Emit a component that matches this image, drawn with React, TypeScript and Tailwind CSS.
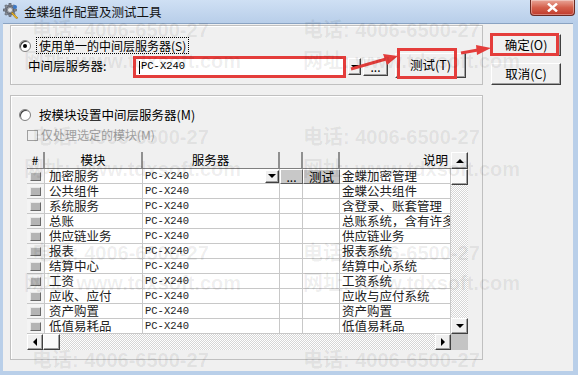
import React from "react";

const CJK = "font-['Noto_Sans_CJK_SC','Noto_Sans',sans-serif]";
const MONO = "font-['Liberation_Mono',monospace]";

const rows: [string, string][] = [
  ["加密服务", "金蝶加密管理"],
  ["公共组件", "金蝶公共组件"],
  ["系统服务", "含登录、账套管理"],
  ["总账", "总账系统，含有许多"],
  ["供应链业务", "供应链业务"],
  ["报表", "报表系统"],
  ["结算中心", "结算中心系统"],
  ["工资", "工资系统"],
  ["应收、应付", "应收与应付系统"],
  ["资产购置", "资产购置"],
  ["低值易耗品", "低值易耗品"],
];

const raised =
  "bg-[#f0f0f0] border border-t-white border-l-white border-r-[#404040] border-b-[#404040] shadow-[inset_-1px_-1px_0_#a0a0a0]";

function Tri({ dir }: { dir: "up" | "down" | "left" | "right" }) {
  const pts = {
    up: "0,4 4,0 8,4",
    down: "0,0 8,0 4,4",
    left: "4,0 4,8 0,4",
    right: "0,0 0,8 4,4",
  }[dir];
  const horiz = dir === "up" || dir === "down";
  return (
    <svg width={horiz ? 8 : 4} height={horiz ? 4 : 8} viewBox={horiz ? "0 0 8 4" : "0 0 4 8"}>
      <polygon points={pts} fill="#000" />
    </svg>
  );
}

function Radio({ on }: { on?: boolean }) {
  return (
    <div className="w-[12px] h-[12px] rounded-full border border-[#808080] bg-white shadow-[inset_1px_1px_0_#404040] flex items-center justify-center">
      {on && <div className="w-[4px] h-[4px] rounded-full bg-black" />}
    </div>
  );
}

function Watermarks() {
  const phone = [
    [32, 20], [303, 20], [32, 127], [303, 127], [32, 243], [303, 243], [32, 350], [303, 350],
  ];
  const site = [
    [24, 51], [303, 51], [24, 159], [303, 159], [24, 273], [303, 273],
  ];
  return (
    <div className="absolute inset-0 pointer-events-none text-black/[0.07] font-bold text-[20px] leading-[20px] font-['Liberation_Sans','Noto_Sans_CJK_SC',sans-serif]">
      {phone.map(([x, y], i) => (
        <div key={"p" + i} className="absolute whitespace-nowrap" style={{ left: x, top: y }}>
          电话: 4006-6500-27
        </div>
      ))}
      {site.map(([x, y], i) => (
        <div key={"s" + i} className="absolute whitespace-nowrap" style={{ left: x, top: y }}>
          网址: www.tdxsoft.com
        </div>
      ))}
    </div>
  );
}

function Annotations() {
  return (
    <svg className="absolute inset-0 pointer-events-none" width={578} height={375}>
      <g fill="none" stroke="#e43d3b" strokeWidth={3}>
        <rect x={398.5} y={49.5} width={57} height={28} />
        <rect x={491.5} y={34.5} width={66} height={20} />
        <line x1={351} y1={69} x2={386} y2={59} />
        <line x1={461} y1={53} x2={478} y2={50} />
      </g>
      <polygon points="383,54 398,56 387,65" fill="#e43d3b" />
      <polygon points="476,45 491,48 477,55" fill="#e43d3b" />
    </svg>
  );
}

function GearIcon() {
  return (
    <svg width="16" height="16" viewBox="0 0 16 16">
      <g fill="#8a8f98" stroke="#4d525a" strokeWidth="0.6">
        <circle cx="7" cy="7" r="5" />
        {[0, 45, 90, 135, 180, 225, 270, 315].map((a) => (
          <rect key={a} x="6" y="0.5" width="2" height="3" transform={`rotate(${a} 7 7)`} />
        ))}
      </g>
      <circle cx="7" cy="7" r="2" fill="#dfe3e8" />
      <path d="M9 9 L15 15 L13 15.5 L8.5 10.5 Z" fill="#e8b426" stroke="#9a6d08" strokeWidth="0.5" />
      <circle cx="12" cy="4" r="2" fill="#3a78c8" />
    </svg>
  );
}

export default function App() {
  const cell = "border-r border-b border-[#c8c8c8]";
  return (
    <div className={`relative w-[578px] h-[375px] overflow-hidden bg-[#b9cfe9] ${CJK} text-[12px] text-black`}>
      {/* title bar */}
      <div className="h-[23px] flex items-start bg-linear-to-b from-[#cfe0f4] to-[#b8cee9]">
        <div className="mt-[3px] ml-[3px]">
          <GearIcon />
        </div>
        <div className="ml-[5px] mt-[3px] leading-[17px] text-[12.5px] text-[#111]">金蝶组件配置及测试工具</div>
        <div className="ml-auto mr-[3px] w-[45px] h-[16px] rounded-b-[4px] border border-t-0 border-[#6b2a22] bg-linear-to-b from-[#e8a598] via-[#d4604c] to-[#c0392b] flex items-center justify-center shadow-[inset_0_0_0_1px_rgba(255,255,255,0.35)]">
          <svg width="11" height="9" viewBox="0 0 11 9">
            <path d="M1 0.5 L10 8.5 M10 0.5 L1 8.5" stroke="#fff" strokeWidth="2.4" />
          </svg>
        </div>
      </div>

      {/* client area */}
      <div className="ml-[3px] mr-[5px] h-[348px] bg-[#f0f0f0] border-t border-[#8aa3c2] flex pl-[7px] pt-[1px]">
        <div className="w-[473px] flex flex-col">
          {/* group 1 */}
          <div className="h-[60px] border border-[#c0c0c0] shadow-[inset_1px_1px_0_#fff] flex flex-col">
            <div className="mt-[11px] ml-[8px] flex items-center h-[17px]">
              <Radio on />
              <div className="ml-[5px] px-[2px] h-[17px] leading-[15px] border border-dotted border-black">
                使用单一的中间层服务器(S)
              </div>
            </div>
            <div className="flex items-start mt-[-1px] ml-[17px]">
              <div className="w-[105px] mt-[5px] leading-[16px] text-[12.5px]">中间层服务器:</div>
              <div className="mt-[3px] w-[213px] h-[22px] border-[3px] border-[#e43d3b] bg-white flex items-center pl-[3px]">
                <div className="w-px h-[13px] bg-black" />
                <span className={`${MONO} text-[10.5px] ml-[1px]`}>PC-X240</span>
              </div>
              <div className={`mt-[5px] ml-[2px] w-[13px] h-[17px] ${raised} flex items-center justify-center`}>
                <Tri dir="down" />
              </div>
              <div className={`mt-[5px] ml-[2px] w-[25px] h-[18px] ${raised} flex items-center justify-center leading-[10px]`}>
                ...
              </div>
              <div className={`ml-[7px] w-[71px] h-[25px] ${raised} flex items-center justify-center text-[12.5px]`}>
                测试(T)
              </div>
            </div>
          </div>

          {/* group 2 */}
          <div className="mt-[10px] h-[265px] border border-[#c0c0c0] shadow-[inset_1px_1px_0_#fff] flex flex-col">
            <div className="mt-[10px] ml-[8px] flex items-center h-[17px]">
              <Radio />
              <div className="ml-[6px] px-[2px] leading-[15px] text-[12.5px]">按模块设置中间层服务器(M)</div>
            </div>
            <div className="mt-[5px] ml-[16px] flex items-center h-[14px]">
              <div className="w-[11px] h-[11px] border border-[#a0a0a0] bg-[#f0f0f0]" />
              <div className="ml-[3px] text-[#a0a0a0] leading-[14px]">仅处理选定的模块(M)</div>
            </div>

            {/* grid */}
            <div className="mt-[10px] ml-[16px] w-[441px] flex flex-col">
              <div className="flex">
                <div className="w-[424px] flex flex-col">
                  <div className="flex h-[17px] bg-[#f0f0f0] border-b border-[#808080] leading-[16px]">
                    <div className="w-[18px] border-r-2 border-[#909090] text-center">#</div>
                    <div className="w-[98px] border-r-2 border-[#909090] text-center text-[12.5px]">模块</div>
                    <div className="w-[137px] border-r-2 border-[#909090] text-center text-[12.5px]">服务器</div>
                    <div className="w-[23px] border-r-2 border-[#909090]" />
                    <div className="w-[37px] border-r-2 border-[#909090]" />
                    <div className="w-[111px] text-right pr-[3px] text-[12.5px]">说明</div>
                  </div>
                  {rows.map(([m, d], i) => (
                    <div key={i} className="flex h-[15px] leading-[14px]">
                      <div className={`w-[18px] ${cell} bg-[#f4f4f4] flex items-center justify-center`}>
                        <div className="w-[11px] h-[9px] bg-[#b4b4b4] border border-t-[#e8e8e8] border-l-[#e8e8e8] border-r-[#686868] border-b-[#686868]" />
                      </div>
                      <div className={`w-[98px] ${cell} bg-white pl-[4px] text-[12.5px] text-[#222]`}>{m}</div>
                      <div className={`w-[137px] ${cell} bg-white pl-[2px] flex items-center justify-between`}>
                        <span className={`${MONO} text-[10.5px] text-[#222]`}>PC-X240</span>
                        {i === 0 && (
                          <div className={`w-[14px] h-[13px] ${raised} flex items-center justify-center`}>
                            <Tri dir="down" />
                          </div>
                        )}
                      </div>
                      {i === 0 ? (
                        <>
                          <div className="w-[23px] h-[15px] bg-[#c8c8c8] border border-t-white border-l-white border-r-[#606060] border-b-[#606060] flex items-center justify-center leading-[8px]">
                            ...
                          </div>
                          <div className="w-[37px] h-[15px] bg-[#c8c8c8] border border-t-white border-l-white border-r-[#606060] border-b-[#606060] flex items-center justify-center text-[12.5px]">
                            测试
                          </div>
                        </>
                      ) : (
                        <>
                          <div className={`w-[23px] ${cell} bg-white`} />
                          <div className={`w-[37px] ${cell} bg-white`} />
                        </>
                      )}
                      <div className={`w-[111px] ${cell} bg-white pl-[2px] text-[12.5px] whitespace-nowrap overflow-hidden text-[#222]`}>
                        {d}
                      </div>
                    </div>
                  ))}
                </div>
                {/* vertical scrollbar */}
                <div className="w-[17px] h-[182px] flex flex-col">
                  <div className={`h-[17px] ${raised} flex items-center justify-center`}>
                    <Tri dir="up" />
                  </div>
                  <div className={`h-[16px] ${raised} bg-[#fafafa]`} />
                  <div className="flex-1 bg-[image:repeating-conic-gradient(#d6d6d6_0_25%,#ffffff_0_50%)] bg-[length:2px_2px]" />
                  <div className={`h-[16px] ${raised} flex items-center justify-center`}>
                    <Tri dir="down" />
                  </div>
                </div>
              </div>
              {/* horizontal scrollbar */}
              <div className="flex h-[16px]">
                <div className={`w-[16px] ${raised} flex items-center justify-center`}>
                  <Tri dir="left" />
                </div>
                <div className={`w-[17px] ${raised} bg-[#fafafa]`} />
                <div className="flex-1 bg-[image:repeating-conic-gradient(#d6d6d6_0_25%,#ffffff_0_50%)] bg-[length:2px_2px]" />
                <div className={`w-[16px] ${raised} flex items-center justify-center`}>
                  <Tri dir="right" />
                </div>
                <div className="w-[17px] bg-[#c4c4c4]" />
              </div>
            </div>
          </div>
        </div>

        {/* right buttons */}
        <div className="ml-[8px] mt-[9px] flex flex-col gap-[7px]">
          <div className={`w-[70px] h-[22px] ${raised} flex items-center justify-center text-[12.5px]`}>确定(O)</div>
          <div className={`w-[70px] h-[22px] ${raised} flex items-center justify-center text-[12.5px]`}>取消(C)</div>
        </div>
      </div>

      <Annotations />
      <Watermarks />
    </div>
  );
}
